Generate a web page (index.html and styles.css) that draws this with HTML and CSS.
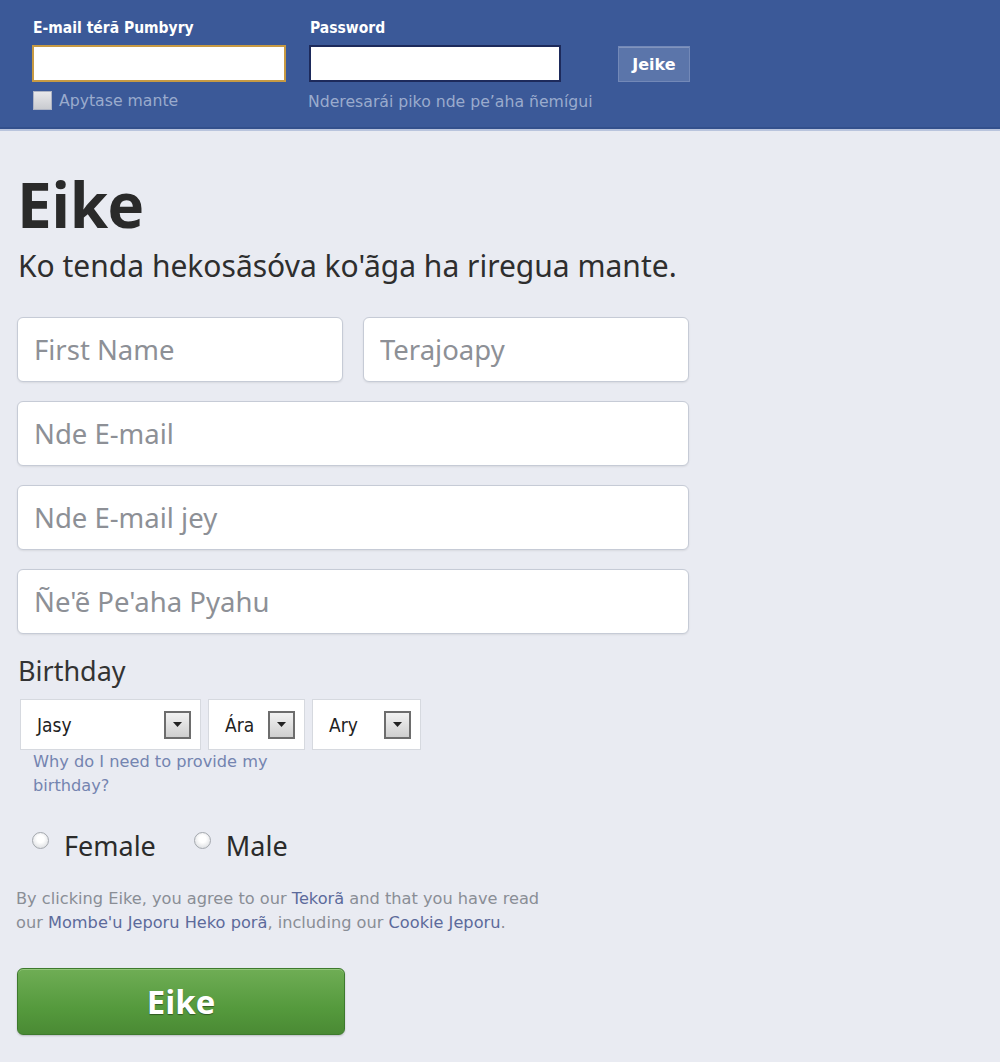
FILE: index.html
```html
<!DOCTYPE html>
<html lang="gn">
<head>
<meta charset="utf-8">
<title>Eike</title>
<link rel="stylesheet" href="styles.css">
</head>
<body>
<header class="topbar">
  <div class="login">
    <div class="login-col col-email">
      <label class="login-label">E-mail térã Pumbyry</label>
      <input class="login-input focused" type="text">
      <div class="remember">
        <span class="checkbox"></span>
        <span class="remember-text">Apytase mante</span>
      </div>
    </div>
    <div class="login-col col-pass">
      <label class="login-label">Password</label>
      <input class="login-input" type="password">
      <a class="forgot">Nderesarái piko nde pe’aha ñemígui</a>
    </div>
    <div class="login-col col-btn">
      <button class="login-btn">Jeike</button>
    </div>
  </div>
</header>
<main class="signup">
  <h1 class="title">Eike</h1>
  <p class="subtitle">Ko tenda hekosãsóva ko'ãga ha riregua mante.</p>
  <div class="fields">
    <div class="name-row">
      <input class="field" type="text" placeholder="First Name">
      <input class="field" type="text" placeholder="Terajoapy">
    </div>
    <input class="field" type="text" placeholder="Nde E-mail">
    <input class="field" type="text" placeholder="Nde E-mail jey">
    <input class="field" type="password" placeholder="Ñe'ẽ Pe'aha Pyahu">
  </div>
  <div class="birthday-label">Birthday</div>
  <div class="selects">
    <div class="select sel-month"><span>Jasy</span><span class="arrow"><svg width="9" height="5" viewBox="0 0 9 5"><path d="M0 0h9L4.5 5z" fill="#222"/></svg></span></div>
    <div class="select sel-day"><span>Ára</span><span class="arrow"><svg width="9" height="5" viewBox="0 0 9 5"><path d="M0 0h9L4.5 5z" fill="#222"/></svg></span></div>
    <div class="select sel-year"><span>Ary</span><span class="arrow"><svg width="9" height="5" viewBox="0 0 9 5"><path d="M0 0h9L4.5 5z" fill="#222"/></svg></span></div>
  </div>
  <a class="why">Why do I need to provide my<br>birthday?</a>
  <div class="gender">
    <label class="radio-item"><span class="radio"></span><span class="radio-text">Female</span></label>
    <label class="radio-item"><span class="radio"></span><span class="radio-text">Male</span></label>
  </div>
  <p class="terms">By clicking Eike, you agree to our <a>Tekorã</a> and that you have read<br>our <a>Mombe'u Jeporu Heko porã</a>, including our <a>Cookie Jeporu</a>.</p>
  <button class="signup-btn">Eike</button>
</main>
</body>
</html>
```

FILE: styles.css
```css
* { box-sizing: border-box; }
html, body { margin: 0; padding: 0; }
body {
  background: #e9ebf2;
  font-family: "DejaVu Sans", sans-serif;
  width: 1000px;
  height: 1062px;
  overflow: hidden;
}
.topbar {
  height: 129px;
  background: #3b5998;
  border-bottom: 2px solid #33508c;
  box-shadow: 0 2px 0 #b9c4dd;
  padding: 19px 0 0 32px;
}
.login { display: flex; align-items: flex-start; }
.login-col { display: flex; flex-direction: column; }
.col-email { width: 254px; }
.col-pass { width: 252px; margin-left: 23px; }
.col-btn { margin-left: 57px; padding-top: 27px; }
.login-label {
  color: #fff;
  font-family: "DejaVu Sans Condensed", "DejaVu Sans", sans-serif;
  font-weight: bold;
  font-size: 15.5px;
  height: 26px;
  padding-left: 1px;
}
.login-input {
  height: 37px;
  width: 100%;
  background: #fff;
  border: 2px solid #1d2a5b;
  margin: 0;
  outline: none;
}
.login-input.focused { border-color: #c79a43; }
.remember { display: flex; align-items: center; margin-top: 9px; gap: 7px; padding-left: 1px; }
.checkbox {
  width: 19px; height: 19px;
  background: linear-gradient(#e8e8ea, #c9cbd0);
  border: 1px solid #aeb4c4;
}
.remember-text, .forgot {
  color: #9aabcd;
  font-family: "DejaVu Sans", sans-serif;
  font-size: 15.7px;
}
.forgot { margin-top: 10px; display: block; margin-left: -1px; white-space: nowrap; }
.login-btn {
  width: 72px; height: 36px;
  background: #5b75aa;
  border: 1px solid #7389b8;
  box-shadow: inset 0 1px 0 #8194bd;
  color: #fff;
  font-family: "DejaVu Sans", sans-serif;
  font-weight: bold;
  font-size: 16px;
  padding: 0;
}
.signup { padding: 0 0 0 17px; width: 700px; }
.title {
  margin: 40px 0 0 0;
  font-family: "Open Sans", sans-serif;
  font-weight: 700;
  font-size: 62px;
  line-height: 70px;
  color: #2a2a2a;
  letter-spacing: -0.5px;
}
.subtitle {
  margin: 9px 0 0 1px;
  font-family: "Noto Sans", sans-serif;
  font-size: 30px;
  line-height: 36px;
  color: #2e2e2e;
  white-space: nowrap;
}
.fields { display: flex; flex-direction: column; gap: 19px; margin-top: 33px; width: 672px; }
.name-row { display: flex; gap: 20px; }
.name-row .field { flex: 1; min-width: 0; }
.field {
  height: 65px;
  width: 100%;
  border: 1px solid #c6cbd6;
  border-radius: 6px;
  background: #fff;
  box-shadow: 0 1px 2px rgba(0,0,0,0.08);
  padding: 0 16px;
  font-family: "Noto Sans", sans-serif;
  font-size: 27.5px;
  margin: 0;
  outline: none;
}
.field::placeholder { color: #8d9096; }
.birthday-label {
  margin-top: 19px;
  margin-left: 1px;
  font-family: "Noto Sans", sans-serif;
  font-size: 27px;
  line-height: 36px;
  color: #333;
}
.selects { display: flex; gap: 7px; margin-top: 10px; margin-left: 3px; }
.select {
  height: 51px;
  background: #fff;
  border: 1px solid #d6d9df;
  display: flex;
  align-items: center;
  justify-content: space-between;
  padding: 0 9px 0 16px;
  font-family: "DejaVu Sans Condensed", "DejaVu Sans", sans-serif;
  font-size: 19px;
  color: #222;
}
.sel-month { width: 181px; }
.sel-day { width: 97px; padding-left: 16px; padding-right: 9px; }
.sel-year { width: 109px; }
.arrow {
  width: 27px; height: 28px;
  border: 2px solid #6d6d6d;
  background: linear-gradient(#f2f2f2, #cfcfcf);
  display: flex; align-items: center; justify-content: center;
}
.why {
  display: block;
  margin: 0 0 0 16px;
  font-family: "DejaVu Sans", sans-serif;
  font-size: 16.2px;
  line-height: 24px;
  color: #7484b0;
}
.gender { display: flex; gap: 38px; margin: 28px 0 0 15px; }
.radio-item { display: flex; align-items: flex-start; }
.radio {
  width: 17px; height: 17px;
  border-radius: 50%;
  border: 1px solid #a4a8ae;
  background: radial-gradient(circle at 50% 40%, #ffffff 30%, #d7d9dd 90%);
  margin-top: 6px;
}
.radio-text {
  margin-left: 15px;
  font-family: "Noto Sans", sans-serif;
  font-size: 27px;
  line-height: 40px;
  color: #2b2b2b;
}
.terms {
  margin: 21px 0 0 -1px;
  font-family: "DejaVu Sans", sans-serif;
  font-size: 16.2px;
  line-height: 24px;
  color: #8a8e96;
  white-space: nowrap;
}
.terms a { color: #5c6a9b; }
.signup-btn {
  margin-top: 33px;
  width: 328px; height: 67px;
  border-radius: 6px;
  border: 1px solid #3e7a2e;
  background: linear-gradient(#6fad55, #559a3d 60%, #4a8a34);
  box-shadow: inset 0 1px 0 #93c77a, 0 1px 2px rgba(0,0,0,0.2);
  color: #fff;
  font-family: "Open Sans", sans-serif;
  font-weight: 700;
  font-size: 33px;
  text-shadow: 0 1px 1px rgba(0,0,0,0.4);
  padding: 0;
}
```
